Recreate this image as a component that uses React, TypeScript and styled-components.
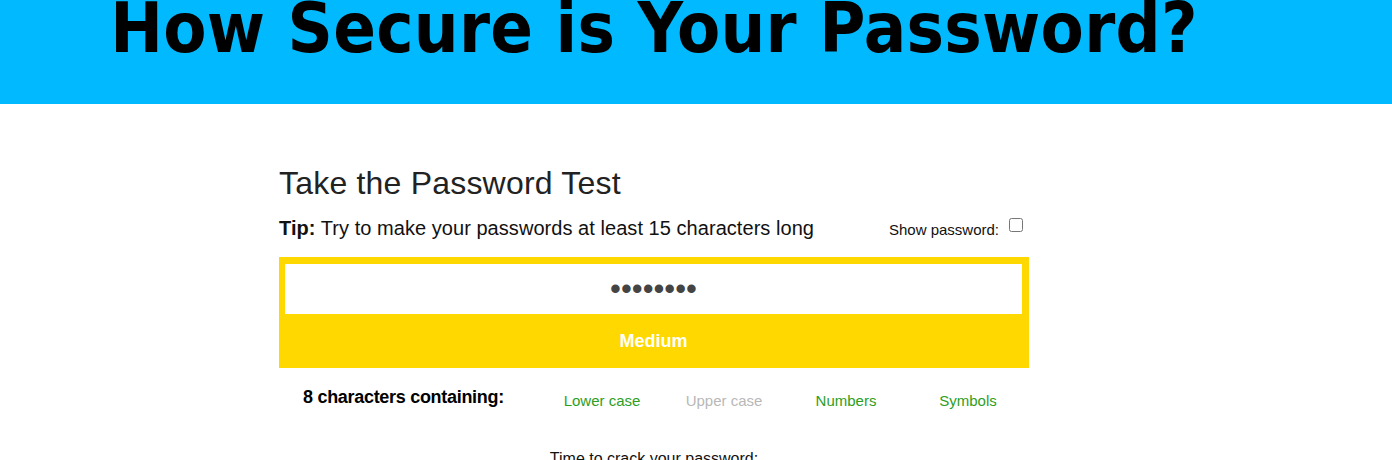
import React, { useState } from "react";
import styled, { createGlobalStyle } from "styled-components";

const GlobalStyle = createGlobalStyle`
  body {
    margin: 0;
    background: #ffffff;
    font-family: "Liberation Sans", Arial, sans-serif;
    color: #111111;
  }
`;

const criteria = [
  { label: "Lower case", met: true },
  { label: "Upper case", met: false },
  { label: "Numbers", met: true },
  { label: "Symbols", met: true },
];

const App = () => {
  const [password, setPassword] = useState("abcd123!");

  return (
    <>
      <GlobalStyle />
      <HeaderBand>
        <HeaderInner>
          <Heading>How Secure is Your Password?</Heading>
        </HeaderInner>
      </HeaderBand>
      <Main>
        <TestTitle>Take the Password Test</TestTitle>
        <TipRow>
          <Tip>
            <strong>Tip:</strong> Try to make your passwords at least 15 characters long
          </Tip>
          <ShowLabel>
            Show password:
            <Checkbox type="checkbox" />
          </ShowLabel>
        </TipRow>
        <StrengthBox>
          <PasswordInput
            type="password"
            value={password}
            autoFocus
            onChange={(e) => setPassword(e.target.value)}
          />
          <StrengthLabel>Medium</StrengthLabel>
        </StrengthBox>
        <CriteriaRow>
          <CriteriaLabel>{password.length} characters containing:</CriteriaLabel>
          {criteria.map((c) => (
            <Criterion key={c.label} $met={c.met}>
              {c.label}
            </Criterion>
          ))}
        </CriteriaRow>
        <CrackTime>Time to crack your password:</CrackTime>
      </Main>
    </>
  );
};

const HeaderBand = styled.header`
  width: 100%;
  height: 104px;
  background-color: #00b9ff;
  overflow: hidden;
`;

const HeaderInner = styled.div`
  width: 1308px;
  display: flex;
  justify-content: center;
`;

const Heading = styled.h1`
  margin: 0;
  margin-top: -14px;
  font-family: "DejaVu Sans Condensed", "DejaVu Sans", sans-serif;
  font-stretch: condensed;
  font-weight: 700;
  font-size: 70px;
  line-height: 84px;
  letter-spacing: 0.3px;
  color: #000000;
  white-space: nowrap;
`;

const Main = styled.main`
  width: 750px;
  margin-left: 279px;
  padding-top: 61px;
  display: flex;
  flex-direction: column;
`;

const TestTitle = styled.h2`
  margin: 0;
  font-size: 32px;
  font-weight: 400;
  letter-spacing: 0.2px;
  color: #222222;
`;

const TipRow = styled.div`
  margin-top: 15px;
  display: flex;
  justify-content: space-between;
  align-items: baseline;
`;

const Tip = styled.p`
  margin: 0;
  font-size: 20px;
  letter-spacing: 0.05px;
  color: #111111;

  strong {
    font-weight: 700;
  }
`;

const ShowLabel = styled.label`
  display: flex;
  align-items: center;
  gap: 10px;
  padding-right: 6px;
  font-size: 15px;
  color: #111111;
`;

const Checkbox = styled.input`
  margin: 0;
  width: 14px;
  height: 14px;
  position: relative;
  top: -5px;
`;

const StrengthBox = styled.div`
  margin-top: 17px;
  background-color: #ffd800;
  padding: 7px 7px 0 6px;
  display: flex;
  flex-direction: column;
`;

const PasswordInput = styled.input`
  height: 50px;
  border: none;
  outline: none;
  padding: 0;
  box-sizing: border-box;
  text-align: center;
  font-family: "Liberation Sans", Arial, sans-serif;
  font-size: 31px;
  color: #444444;
  caret-color: #333333;
`;

const StrengthLabel = styled.div`
  height: 54px;
  display: flex;
  align-items: center;
  justify-content: center;
  font-size: 18px;
  font-weight: 700;
  color: #ffffff;
`;

const CriteriaRow = styled.div`
  display: grid;
  grid-template-columns: 262px repeat(4, 122px);
  align-items: center;
  padding-top: 17px;
`;

const CriteriaLabel = styled.div`
  padding-left: 24px;
  font-size: 18px;
  font-weight: 700;
  letter-spacing: -0.3px;
  color: #000000;
`;

const Criterion = styled.div<{ $met: boolean }>`
  text-align: center;
  padding-top: 7px;
  font-size: 15px;
  color: ${(p) => (p.$met ? "#2e9e23" : "#b8b8b8")};
`;

const CrackTime = styled.p`
  margin: 41px 0 0;
  text-align: center;
  font-size: 16px;
  color: #111111;
`;

export default App;
